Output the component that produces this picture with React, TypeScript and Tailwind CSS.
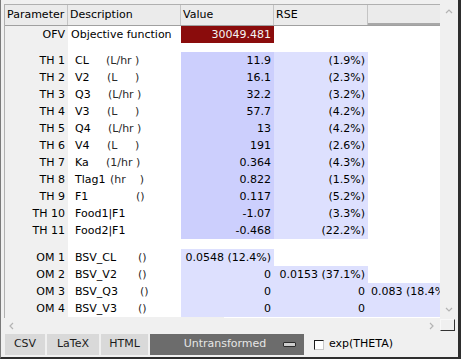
import { FC, ReactNode } from "react"

type Tone = "dark" | "light" | "red" | "none"

type Cell = {
  text?: string
  tone?: Tone
  left?: boolean
}

type Row = {
  label: string
  name: string
  unit?: string
  unitWidth?: string
  cells: Cell[]
}

const toneClass: Record<Tone, string> = {
  dark: "bg-[#cccffd]",
  light: "bg-[#dde0fe]",
  red: "bg-[#8a0c0c] text-[#f4f4f4]",
  none: "",
}

const colWidths = ["w-[93px]", "w-[94px]", "w-[100px]"]

const thetas: Row[] = [
  { label: "TH 1", name: "CL", unit: "(L/hr )", unitWidth: "w-[31px]", cells: [{ text: "11.9", tone: "dark" }, { text: "(1.9%)", tone: "light" }] },
  { label: "TH 2", name: "V2", unit: "(L     )", unitWidth: "w-[32px]", cells: [{ text: "16.1", tone: "dark" }, { text: "(2.3%)", tone: "light" }] },
  { label: "TH 3", name: "Q3", unit: "(L/hr )", unitWidth: "w-[33px]", cells: [{ text: "32.2", tone: "dark" }, { text: "(3.2%)", tone: "light" }] },
  { label: "TH 4", name: "V3", unit: "(L     )", unitWidth: "w-[32px]", cells: [{ text: "57.7", tone: "dark" }, { text: "(4.2%)", tone: "light" }] },
  { label: "TH 5", name: "Q4", unit: "(L/hr )", unitWidth: "w-[33px]", cells: [{ text: "13", tone: "dark" }, { text: "(4.2%)", tone: "light" }] },
  { label: "TH 6", name: "V4", unit: "(L     )", unitWidth: "w-[32px]", cells: [{ text: "191", tone: "dark" }, { text: "(2.6%)", tone: "light" }] },
  { label: "TH 7", name: "Ka", unit: "(1/hr )", unitWidth: "w-[31px]", cells: [{ text: "0.364", tone: "dark" }, { text: "(4.3%)", tone: "light" }] },
  { label: "TH 8", name: "Tlag1", unit: "(hr    )", unitWidth: "w-[35px]", cells: [{ text: "0.822", tone: "dark" }, { text: "(1.5%)", tone: "light" }] },
  { label: "TH 9", name: "F1", unit: "()", unitWidth: "w-[61px]", cells: [{ text: "0.117", tone: "dark" }, { text: "(5.2%)", tone: "light" }] },
  { label: "TH 10", name: "Food1|F1", cells: [{ text: "-1.07", tone: "dark" }, { text: "(3.3%)", tone: "light" }] },
  { label: "TH 11", name: "Food2|F1", cells: [{ text: "-0.468", tone: "dark" }, { text: "(22.2%)", tone: "light" }] },
]

const omegas: Row[] = [
  { label: "OM 1", name: "BSV_CL", unit: "()", unitWidth: "w-[63px]", cells: [{ text: "0.0548 (12.4%)", tone: "light" }] },
  { label: "OM 2", name: "BSV_V2", unit: "()", unitWidth: "w-[63px]", cells: [{ text: "0", tone: "light" }, { text: "0.0153 (37.1%)", tone: "light" }] },
  { label: "OM 3", name: "BSV_Q3", unit: "()", unitWidth: "w-[65px]", cells: [{ text: "0", tone: "light" }, { text: "0", tone: "light" }, { text: "0.083 (18.4%)", tone: "light", left: true }] },
  { label: "OM 4", name: "BSV_V3", unit: "()", unitWidth: "w-[63px]", cells: [{ text: "0", tone: "light" }, { text: "0", tone: "light" }, { tone: "light" }] },
]

const Label: FC<{ children?: ReactNode; tall?: string }> = ({ children, tall = "h-[17px]" }) => (
  <div className={`w-[63px] shrink-0 ${tall} bg-[#f0f0f0] text-right pr-[3px]`}>{children}</div>
)

const DataRow: FC<{ row: Row }> = ({ row }) => (
  <div className="flex h-[17px] leading-[17px] whitespace-pre">
    <Label>{row.label}</Label>
    <div className="w-[113px] shrink-0 pl-[7px] flex bg-white">
      <span className={`${row.unitWidth ?? ""} shrink-0`}>{row.name}</span>
      {row.unit && <span className="text-[#2a2a2a]">{row.unit}</span>}
    </div>
    {[0, 1, 2].map((i) => {
      const c = row.cells[i]
      return (
        <div
          key={i}
          className={`${colWidths[i]} shrink-0 ${c ? toneClass[c.tone ?? "none"] : ""} ${c?.left ? "text-left pl-[3px]" : "text-right pr-[3px]"}`}
        >
          {c?.text}
        </div>
      )
    })}
  </div>
)

const Spacer: FC<{ h: string }> = ({ h }) => (
  <div className={`flex ${h}`}>
    <Label tall={h} />
    <div className="flex-1 bg-white" />
  </div>
)

const Chevron: FC<{ dir: "up" | "down" | "left" | "right" }> = ({ dir }) => {
  const d = {
    up: "M1 5 L4 2 L7 5",
    down: "M1 2 L4 5 L7 2",
    left: "M5 1 L2 4 L5 7",
    right: "M2 1 L5 4 L2 7",
  }[dir]
  return (
    <svg width="8" height="8" viewBox="0 0 8 8">
      <path d={d} fill="none" stroke="#b4b4b4" strokeWidth="1.2" />
    </svg>
  )
}

const HeadCell: FC<{ w: string; children?: ReactNode }> = ({ w, children }) => (
  <div className={`${w} shrink-0 h-full border-r border-[#c4c4c4] pl-[2px] flex items-center`}>{children}</div>
)

const Button: FC<{ children: ReactNode; w: string }> = ({ children, w }) => (
  <div className={`${w} h-[21px] bg-[#d9d9d9] flex items-center justify-center text-[#1c1c1c]`}>{children}</div>
)

export default function App() {
  return (
    <div className="w-[461px] h-[359px] bg-[#f0f0f0] border-l border-l-[#7a7a7a] border-r-[3px] border-r-[#2e2e2e] border-b-[2px] border-b-[#2e2e2e] flex flex-col pt-[4px] pl-[3px] font-['DejaVu_Sans',sans-serif] text-[11px] text-black overflow-hidden">
      <div className="flex h-[314px]">
        <div className="w-[436px] shrink-0 border-l border-t border-[#b0b0b0] flex flex-col overflow-hidden">
          <div className="flex h-[21px] shrink-0 bg-[#ebebeb] border-b border-[#a0a0a0]">
            <HeadCell w="w-[63px]">Parameter</HeadCell>
            <HeadCell w="w-[113px]">Description</HeadCell>
            <HeadCell w="w-[93px]">Value</HeadCell>
            <HeadCell w="w-[94px]">RSE</HeadCell>
            <div className="flex-1 border-b-[2px] border-[#a8a8a8]" />
          </div>
          <div className="flex-1 flex flex-col bg-white">
            <div className="flex h-[17px] leading-[17px] whitespace-pre">
              <Label>OFV</Label>
              <div className="w-[113px] shrink-0 pl-[3px]">Objective function</div>
              <div className={`w-[93px] shrink-0 text-right pr-[3px] ${toneClass.red}`}>30049.481</div>
            </div>
            <Spacer h="h-[9px]" />
            {thetas.map((r) => (
              <DataRow key={r.label} row={r} />
            ))}
            <Spacer h="h-[10px]" />
            {omegas.map((r) => (
              <DataRow key={r.label} row={r} />
            ))}
            <Spacer h="flex-1" />
          </div>
        </div>
        <div className="w-[18px] shrink-0 flex flex-col items-center justify-between py-[4px] pr-[1px] bg-[#f0f0f0]">
          <Chevron dir="up" />
          <Chevron dir="down" />
        </div>
      </div>
      <div className="flex h-[15px] shrink-0">
        <div className="w-[436px] flex items-center justify-between px-[4px]">
          <Chevron dir="left" />
          <Chevron dir="right" />
        </div>
        <div className="w-[15px] h-[12px] mt-[1px] border-t border-l border-t-[#f8f8f8] border-l-[#f8f8f8] border-r border-b border-r-[#333] border-b-[#333]" />
      </div>
      <div className="flex h-[24px] shrink-0 items-start pt-[1px] gap-[2px] pl-[1px]">
        <Button w="w-[40px]">CSV</Button>
        <Button w="w-[52px]">LaTeX</Button>
        <Button w="w-[47px]">HTML</Button>
        <div className="w-[154px] h-[21px] bg-[#6c6c6c] text-[#e6e6e6] flex items-center relative">
          <span className="w-full text-center pr-[4px]">Untransformed</span>
          <span className="absolute right-[8px] top-[8px] w-[13px] h-[5px] bg-[#cdcdcd] border border-[#2c2c2c] rounded-[1px]" />
        </div>
        <div className="flex items-center h-[21px] ml-[8px] gap-[5px]">
          <span className="w-[10px] h-[10px] bg-white border-t border-l border-[#1a1a1a] border-r border-b border-r-[#c8c8c8] border-b-[#c8c8c8]" />
          <span>exp(THETA)</span>
        </div>
      </div>
    </div>
  )
}
